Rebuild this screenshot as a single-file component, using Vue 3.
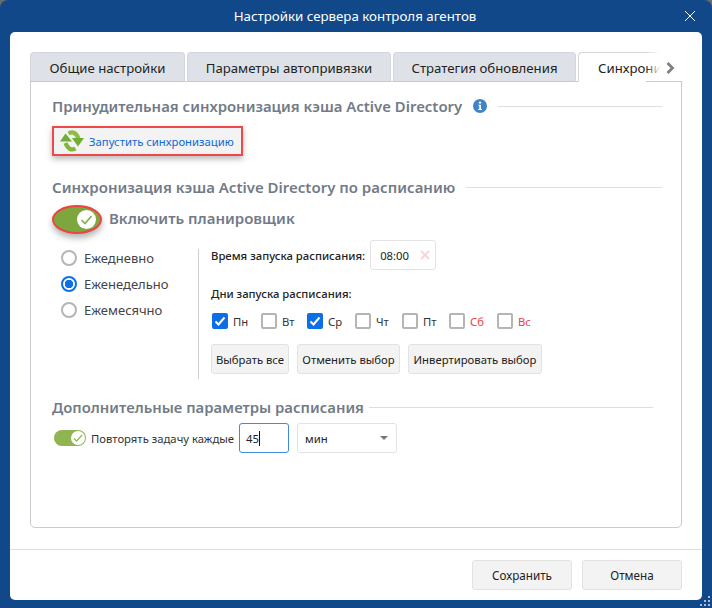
<script setup>
const radios = [
  { label: 'Ежедневно', on: false },
  { label: 'Еженедельно', on: true },
  { label: 'Ежемесячно', on: false }
]
const days = [
  { label: 'Пн', on: true, w: 49 },
  { label: 'Вт', on: false, w: 46 },
  { label: 'Ср', on: true, w: 48 },
  { label: 'Чт', on: false, w: 47 },
  { label: 'Пт', on: false, w: 47 },
  { label: 'Сб', on: false, w: 48, red: true },
  { label: 'Вс', on: false, w: 40, red: true }
]
</script>

<template>
  <div class="window">
    <header class="titlebar">
      <span class="title">Настройки сервера контроля агентов</span>
      <svg class="close" width="12" height="12" viewBox="0 0 12 12"><path d="M1 1l10 10M11 1L1 11" stroke="#fff" stroke-width="1" fill="none" /></svg>
    </header>
    <div class="sheet">
      <main class="content">
        <nav class="tabs">
          <div class="tab t1">Общие настройки</div>
          <div class="tab t2">Параметры автопривязки</div>
          <div class="tab t3">Стратегия обновления</div>
          <div class="tab t4 active">Синхрони</div>
          <div class="tab-fade"></div>
          <svg class="chev" width="9" height="12" viewBox="0 0 9 12"><path d="M1.500 1l5 5-5 5" stroke="#808080" stroke-width="2.800" fill="none" /></svg>
        </nav>
        <section class="panel">
          <div class="heading h1">
            <span>Принудительная синхронизация кэша Active Directory</span>
            <svg class="info" width="14" height="14" viewBox="0 0 14 14">
              <circle cx="7" cy="7" r="7" fill="#3f83c9" />
              <circle cx="7" cy="3.600" r="1.200" fill="#fff" />
              <path d="M5.400 5.800H8v4.200h1v1H5.200v-1h1V6.800h-.8z" fill="#fff" />
            </svg>
            <i class="rule r1"></i>
          </div>
          <button class="sync">
            <svg class="sync-icon" width="24" height="22" viewBox="0 0 24 22">
              <path d="M8.500 3.500Q15 0 18.500 8.500" stroke="#8fbc45" stroke-width="4.200" fill="none" />
              <path d="M15.500 18.500Q9 22 5.500 13" stroke="#84b63a" stroke-width="4.200" fill="none" />
              <path d="M5.500 3.500L0 11.500h12z" fill="#6fae30" />
              <path d="M12 8h12l-6 8.500z" fill="#6fae30" />
            </svg>
            <span>Запустить синхронизацию</span>
          </button>
          <div class="heading h2">
            <span>Синхронизация кэша Active Directory по расписанию</span>
            <i class="rule r2"></i>
          </div>
          <div class="scheduler">
            <div class="toggle big">
              <span class="knob">
                <svg width="15" height="15" viewBox="0 0 15 15"><path d="M2.500 8l3.500 3.500 6.500-7.500" stroke="#86ad47" stroke-width="1.600" fill="none" /></svg>
              </span>
            </div>
            <span class="scheduler-label">Включить планировщик</span>
          </div>
          <div class="schedule">
            <div class="radios">
              <label v-for="r in radios" :key="r.label" class="radio">
                <span class="dot" :class="{ on: r.on }"></span>
                <span>{{ r.label }}</span>
              </label>
            </div>
            <div class="details">
              <div class="time-row">
                <span class="bold">Время запуска расписания:</span>
                <div class="field time">
                  <span>08:00</span>
                  <svg width="10" height="10" viewBox="0 0 10 10"><path d="M1 1l8 8M9 1L1 9" stroke="#f9d3d3" stroke-width="1.800" fill="none" /></svg>
                </div>
              </div>
              <div class="bold days-label">Дни запуска расписания:</div>
              <div class="days">
                <label v-for="d in days" :key="d.label" class="day" :class="{ red: d.red }" :style="{ width: d.w + 'px' }">
                  <span class="box" :class="{ on: d.on }">
                    <svg v-if="d.on" width="12" height="12" viewBox="0 0 12 12"><path d="M1.500 6.500l3 3L10.500 2.500" stroke="#fff" stroke-width="2" fill="none" /></svg>
                  </span>
                  <span>{{ d.label }}</span>
                </label>
              </div>
              <div class="actions">
                <button class="btn b1">Выбрать все</button>
                <button class="btn b2">Отменить выбор</button>
                <button class="btn b3">Инвертировать выбор</button>
              </div>
            </div>
          </div>
          <div class="heading h3">
            <span>Дополнительные параметры расписания</span>
            <i class="rule r3"></i>
          </div>
          <div class="repeat">
            <div class="toggle small">
              <span class="knob">
                <svg width="12" height="12" viewBox="0 0 12 12"><path d="M2 6.500l2.600 2.600L10 3" stroke="#8fb552" stroke-width="1.200" fill="none" /></svg>
              </span>
            </div>
            <span class="repeat-label">Повторять задачу каждые</span>
            <div class="field num"><span>45</span><i class="caret"></i></div>
            <div class="field select">
              <span>мин</span>
              <i class="arrow"></i>
            </div>
          </div>
        </section>
      </main>
      <footer class="footer">
        <button class="btn foot">Сохранить</button>
        <button class="btn foot">Отмена</button>
      </footer>
    </div>
    <svg class="grip" width="11" height="11" viewBox="0 0 11 11" fill="#a9bdd6">
      <rect x="8" y="0" width="2" height="2" /><rect x="4" y="4" width="2" height="2" /><rect x="8" y="4" width="2" height="2" />
      <rect x="0" y="8" width="2" height="2" /><rect x="4" y="8" width="2" height="2" /><rect x="8" y="8" width="2" height="2" />
    </svg>
  </div>
</template>

<style scoped>
.window {
  position: relative;
  width: 712px;
  height: 608px;
  box-sizing: border-box;
  background: #10488a;
  border-radius: 8px 8px 0 0;
  padding: 0 10px 8px;
  display: flex;
  flex-direction: column;
  font-family: "Noto Sans", "Open Sans", sans-serif;
  font-size: 11.300px;
  color: #222;
}
.titlebar {
  position: relative;
  height: 32px;
  flex: none;
  display: flex;
  align-items: center;
  justify-content: center;
  color: #fff;
  font-size: 13.300px;
}
.title { margin-left: -2px; margin-top: -1px; }
.close { position: absolute; right: 6px; top: 10px; }
.sheet {
  flex: 1;
  background: #fff;
  border-radius: 5px;
  display: flex;
  flex-direction: column;
  min-height: 0;
}
.content {
  flex: 1;
  padding: 20px 20px 0;
  display: flex;
  flex-direction: column;
}
.tabs {
  position: relative;
  display: flex;
  gap: 2px;
  height: 30px;
  overflow: hidden;
  margin-bottom: -1px;
  z-index: 1;
}
.tab {
  box-sizing: border-box;
  flex: none;
  height: 30px;
  background: #dee2e8;
  border: 1px solid #d3d6dc;
  border-bottom: 1px solid #c8c8d0;
  border-radius: 4px 4px 0 0;
  font-size: 13.200px;
  text-align: center;
  line-height: 30px;
  color: #222;
  white-space: nowrap;
}
.t1 { width: 155px; }
.t2 { width: 204px; }
.t3 { width: 183px; }
.t4 {
  width: 104px;
  background: #fff;
  border-color: #d3d6dc;
  border-bottom-color: #fff;
  text-align: left;
  padding-left: 19px;
}
.tab-fade {
  position: absolute;
  left: 616px;
  top: 0;
  width: 36px;
  height: 30px;
  box-sizing: border-box;
  border-bottom: 1px solid #c9cbd1;
  background: linear-gradient(90deg, rgba(255, 255, 255, 0), #fff 40%);
}
.chev { position: absolute; left: 636px; top: 10px; }
.panel {
  flex: none;
  height: 447px;
  box-sizing: border-box;
  border: 1px solid #c9cbd1;
  border-radius: 0 0 5px 5px;
  padding: 12px 19px 0 21px;
}
.heading {
  display: flex;
  align-items: center;
  height: 24px;
  font-size: 14.850px;
  font-weight: 600;
  color: #727b87;
  white-space: nowrap;
}
.h1 { font-size: 14.920px; }
.rule { flex: 1; height: 1px; background: #dcdee2; }
.r1 { margin-left: 11px; }
.r2 { margin-left: 11px; }
.r3 { margin-left: 5px; margin-right: 9px; }
.info { margin-left: 11px; flex: none; }
.sync {
  margin-top: 8px;
  box-sizing: border-box;
  width: 191px;
  height: 30px;
  display: flex;
  align-items: center;
  gap: 5px;
  padding: 0 0 0 6px;
  background: #f3f3f3;
  border: 2px solid #f04848;
  box-shadow: 0 3px 6px rgba(0, 0, 0, .28);
  font: inherit;
  color: #0c68d8;
  white-space: nowrap;
}
.sync-icon { flex: none; }
.scheduler {
  margin-top: 5px;
  display: flex;
  align-items: center;
  gap: 7px;
  height: 30px;
}
.h2 { margin-top: 19px; font-size: 15px; }
.toggle {
  position: relative;
  box-sizing: border-box;
  background: #7ea63f;
  display: flex;
  align-items: center;
  justify-content: flex-end;
  flex: none;
}
.toggle.big {
  width: 50px;
  height: 29px;
  border-radius: 50%;
  border: 2px solid #ee4343;
  padding-right: 4px;
  box-shadow: 0 4px 6px rgba(0, 0, 0, .3);
}
.toggle.small {
  width: 32px;
  height: 16px;
  margin-left: 2px;
  border-radius: 8px;
  background: #8fb552;
  padding-right: 1px;
}
.knob {
  background: #fff;
  border-radius: 50%;
  display: flex;
  align-items: center;
  justify-content: center;
}
.big .knob { width: 19px; height: 19px; }
.small .knob { width: 14px; height: 14px; }
.scheduler-label {
  font-size: 15px;
  font-weight: 600;
  color: #727b87;
  margin-top: -3px;
}
.schedule {
  display: flex;
  margin-top: 15px;
  margin-left: 9px;
  height: 130px;
}
.radios {
  width: 138px;
  flex: none;
  box-sizing: border-box;
  border-right: 1px solid #cfcfcf;
}
.radio {
  display: flex;
  align-items: center;
  gap: 7px;
  height: 26px;
  font-size: 13px;
  color: #444;
}
.radio:first-child { margin-top: -4px; }
.dot {
  box-sizing: border-box;
  width: 16px;
  height: 16px;
  border-radius: 50%;
  border: 2px solid #b5b5b5;
  background: #fff;
}
.dot.on {
  border-color: #0d6fe8;
  background: radial-gradient(circle, #0d6fe8 0 4px, #fff 4.500px);
}
.details {
  padding-left: 12px;
  margin-top: -9px;
}
.time-row {
  display: flex;
  align-items: center;
  gap: 5px;
  height: 30px;
}
.bold { font-weight: 500; color: #222; white-space: nowrap; }
.field {
  box-sizing: border-box;
  height: 30px;
  background: #fff;
  border: 1px solid #e3e3e3;
  border-radius: 3px;
  display: flex;
  align-items: center;
  color: #222;
}
.time {
  width: 66px;
  padding: 0 5px 0 9px;
  justify-content: space-between;
}
.days-label { margin-top: 15px; line-height: 18px; }
.days { display: flex; margin-top: 9px; margin-left: 1px; }
.day {
  flex: none;
  display: flex;
  align-items: center;
  gap: 5px;
  height: 18px;
  color: #333;
}
.day.red { color: #ee3e3e; }
.box {
  box-sizing: border-box;
  width: 16px;
  height: 16px;
  flex: none;
  border: 2px solid #b5b5b5;
  border-radius: 2px;
  background: #fff;
  display: flex;
  align-items: center;
  justify-content: center;
}
.box.on { background: #0d6fe8; border-color: #0d6fe8; }
.actions { display: flex; gap: 8px; margin-top: 14px; }
.btn {
  box-sizing: border-box;
  height: 30px;
  padding: 0;
  background: #f3f3f3;
  border: 1px solid #e2e2e2;
  border-radius: 3px;
  font: inherit;
  color: #222;
  white-space: nowrap;
}
.b1 { width: 78px; }
.b2 { width: 103px; }
.b3 { width: 134px; }
.h3 { margin-top: 16px; }
.repeat {
  display: flex;
  align-items: center;
  height: 30px;
  margin-top: 4px;
}
.repeat-label { margin-left: 5px; color: #333; white-space: nowrap; }
.num {
  width: 50px;
  margin-left: 5px;
  padding-left: 6px;
  border-color: #3f8ae0;
}
.caret { width: 1px; height: 15px; background: #111; }
.select {
  width: 100px;
  margin-left: 8px;
  padding: 0 8px 0 7px;
  justify-content: space-between;
}
.arrow {
  width: 0;
  height: 0;
  border-left: 4px solid transparent;
  border-right: 4px solid transparent;
  border-top: 4px solid #777;
}
.footer {
  flex: none;
  height: 51px;
  box-sizing: border-box;
  margin-top: 21px;
  border-top: 1px solid #dcdcdc;
  display: flex;
  justify-content: flex-end;
  gap: 10px;
  padding: 10px 20px 0;
}
.foot { width: 100px; font-size: 11.700px; }
.grip { position: absolute; right: 1px; bottom: 1px; }
</style>

<style>
html, body { margin: 0; background: #6b6b6b; }
</style>
